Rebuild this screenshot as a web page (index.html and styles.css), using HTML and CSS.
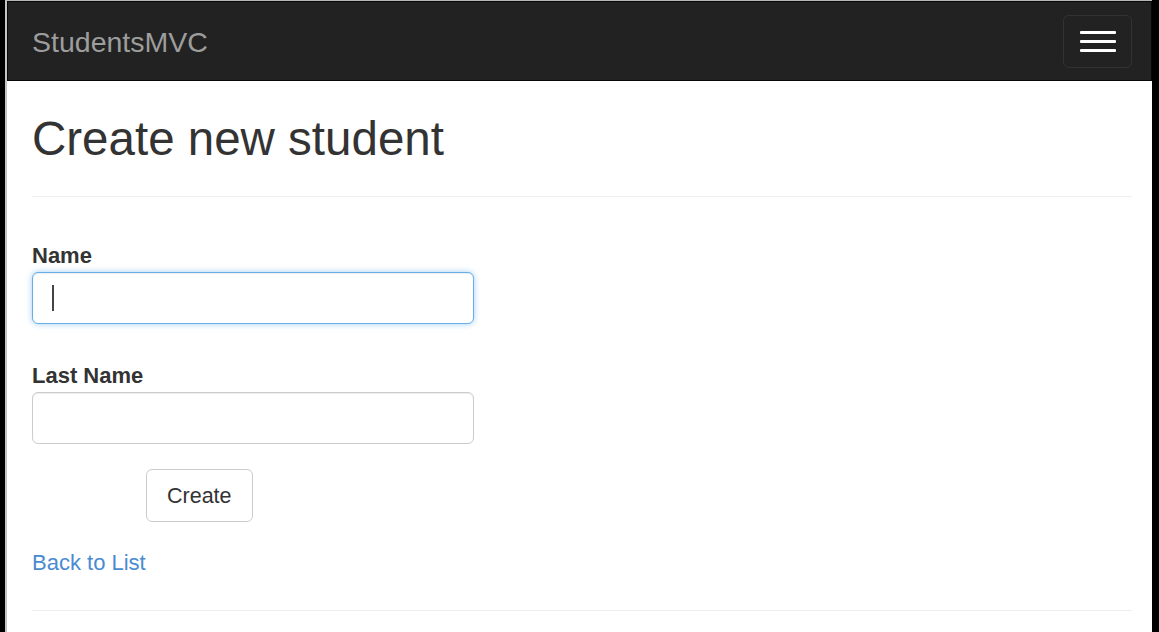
FILE: index.html
```html
<!DOCTYPE html>
<html lang="en">
<head>
<meta charset="utf-8">
<title>Create - StudentsMVC</title>
<link rel="stylesheet" href="styles.css">
</head>
<body>
<div class="page">
  <nav class="navbar">
    <a class="brand" href="#">StudentsMVC</a>
    <button class="toggle" type="button" aria-label="Toggle navigation">
      <span class="bar"></span>
      <span class="bar"></span>
      <span class="bar"></span>
    </button>
  </nav>
  <main class="content">
    <h2 class="title">Create new student</h2>
    <hr class="rule rule-top">
    <form class="form">
      <div class="group">
        <label class="label">Name</label>
        <div class="field focused"><span class="caret"></span></div>
      </div>
      <div class="group group-second">
        <label class="label">Last Name</label>
        <div class="field"></div>
      </div>
      <div class="actions">
        <button class="btn" type="button">Create</button>
      </div>
    </form>
    <div class="back"><a class="link" href="#">Back to List</a></div>
    <hr class="rule rule-bottom">
  </main>
</div>
</body>
</html>
```
FILE: styles.css
```css
html, body {
  margin: 0;
  padding: 0;
}
body {
  background: #000;
  width: 1159px;
  height: 632px;
  overflow: hidden;
  font-family: "Liberation Sans", Arial, sans-serif;
  color: #333;
}
.page {
  margin-left: 5px;
  width: 1145px;
  height: 631px;
  background: #fff;
  border-top: 1px solid #b8b8b8;
  border-left: 2px solid #c4c4c4;
}
.navbar {
  box-sizing: border-box;
  height: 80px;
  background: #222;
  border: 1px solid #080808;
  display: flex;
  align-items: center;
  justify-content: space-between;
  padding: 0 19px 0 24px;
}
.brand {
  font-size: 28.5px;
  color: #9d9d9d;
  text-decoration: none;
  line-height: 30px;
  margin-top: 1px;
}
.toggle {
  box-sizing: border-box;
  width: 69px;
  height: 53px;
  background: transparent;
  border: 1px solid #333;
  border-radius: 6px;
  display: flex;
  flex-direction: column;
  align-items: center;
  justify-content: center;
  gap: 6px;
  padding: 0;
}
.bar {
  display: block;
  width: 36px;
  height: 3px;
  background: #fff;
  border-radius: 1px;
}
.content {
  padding: 0 20px 0 25px;
}
.title {
  font-size: 47.5px;
  font-weight: normal;
  line-height: 52px;
  margin: 32px 0 0;
  color: #333;
}
.rule {
  border: 0;
  border-top: 1px solid #eee;
  height: 0;
  margin: 0;
}
.rule-top {
  margin-top: 31px;
}
.form {
  margin: 0;
}
.group {
  padding-top: 47px;
}
.group-second {
  padding-top: 40px;
}
.label {
  display: block;
  font-size: 22px;
  font-weight: bold;
  line-height: 24px;
  margin-bottom: 4px;
}
.field {
  box-sizing: border-box;
  width: 442px;
  height: 52px;
  border: 1px solid #ccc;
  border-radius: 6px;
  background: #fff;
  box-shadow: inset 0 1px 1px rgba(0, 0, 0, 0.075);
  display: flex;
  align-items: center;
  padding: 0 19px;
}
.field.focused {
  border-color: #66afe9;
  box-shadow: inset 0 1px 1px rgba(0, 0, 0, 0.075), 0 0 6px rgba(102, 175, 233, 0.6);
}
.caret {
  display: block;
  width: 2px;
  height: 26px;
  background: #444;
}
.actions {
  padding-top: 25px;
  padding-left: 114px;
}
.btn {
  box-sizing: border-box;
  height: 53px;
  padding: 0 20px;
  font-family: "Liberation Sans", Arial, sans-serif;
  font-size: 21.5px;
  color: #333;
  background: #fff;
  border: 1px solid #ccc;
  border-radius: 6px;
  line-height: 30px;
}
.back {
  padding-top: 26px;
  font-size: 22px;
  line-height: 30px;
}
.link {
  color: #4a8bd0;
  text-decoration: none;
}
.rule-bottom {
  margin-top: 32px;
}
```
